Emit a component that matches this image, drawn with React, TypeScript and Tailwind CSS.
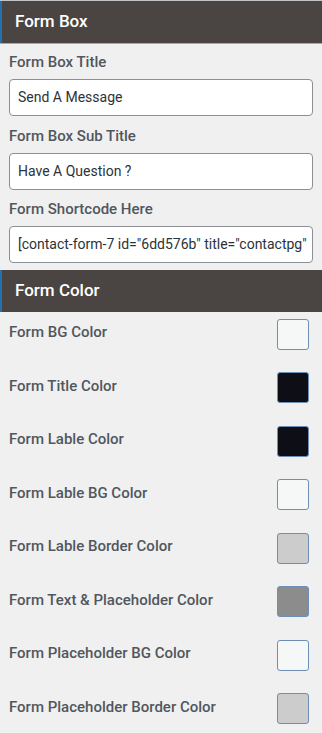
const font = { fontFamily: 'Roboto, "Liberation Sans", sans-serif' }

function SectionHeader({ title }: { title: string }) {
  return (
    <div className="h-[42px] flex items-center border-l-2 border-[#2271b1] bg-[#4a4542] pl-[13px] text-white text-[17px] font-medium">
      {title}
    </div>
  )
}

function Field({ label, value }: { label: string; value: string }) {
  return (
    <div>
      <div className="text-[15px] leading-5 font-medium text-[#50575e] mb-[7px]">{label}</div>
      <div className="h-[37px] flex items-center rounded-[4px] border border-[#8c8f94] bg-white pl-[8px] pr-[2px] text-[14px] text-[#2c3338] whitespace-nowrap overflow-hidden">
        {value}
      </div>
    </div>
  )
}

const colors = [
  { label: 'Form BG Color', fill: 'bg-[#f6f7f7]' },
  { label: 'Form Title Color', fill: 'bg-[#0e0e16]' },
  { label: 'Form Lable Color', fill: 'bg-[#0e0e16]' },
  { label: 'Form Lable BG Color', fill: 'bg-[#f6f7f7]' },
  { label: 'Form Lable Border Color', fill: 'bg-[#cccccc]' },
  { label: 'Form Text & Placeholder Color', fill: 'bg-[#8c8c8c]' },
  { label: 'Form Placeholder BG Color', fill: 'bg-[#f6f7f7]' },
  { label: 'Form Placeholder Border Color', fill: 'bg-[#cccccc]' },
]

export default function App() {
  return (
    <div className="w-[322px] h-[733px] overflow-hidden bg-[#f0f0f0]" style={font}>
      <div className="border-t border-[#c3c4c7]">
        <SectionHeader title="Form Box" />
      </div>
      <div className="border-t border-[#a7aaad] px-[9px] pt-[8px] pb-[7px] flex flex-col gap-[9.5px]">
        <Field label="Form Box Title" value="Send A Message" />
        <Field label="Form Box Sub Title" value="Have A Question ?" />
        <Field label="Form Shortcode Here" value={'[contact-form-7 id="6dd576b" title="contactpg"'} />
      </div>
      <SectionHeader title="Form Color" />
      <div className="px-[9px] pt-[6px] flex flex-col gap-[21.5px]">
        {colors.map((c) => (
          <div key={c.label} className="h-[32px] flex items-center justify-between pr-[4px]">
            <span className="text-[15px] leading-5 font-medium text-[#50575e] -mt-[4px]">{c.label}</span>
            <div className={`w-[32px] h-[31px] rounded-[3px] border-[1.5px] border-[#6b8fb5] ${c.fill}`} />
          </div>
        ))}
      </div>
    </div>
  )
}
